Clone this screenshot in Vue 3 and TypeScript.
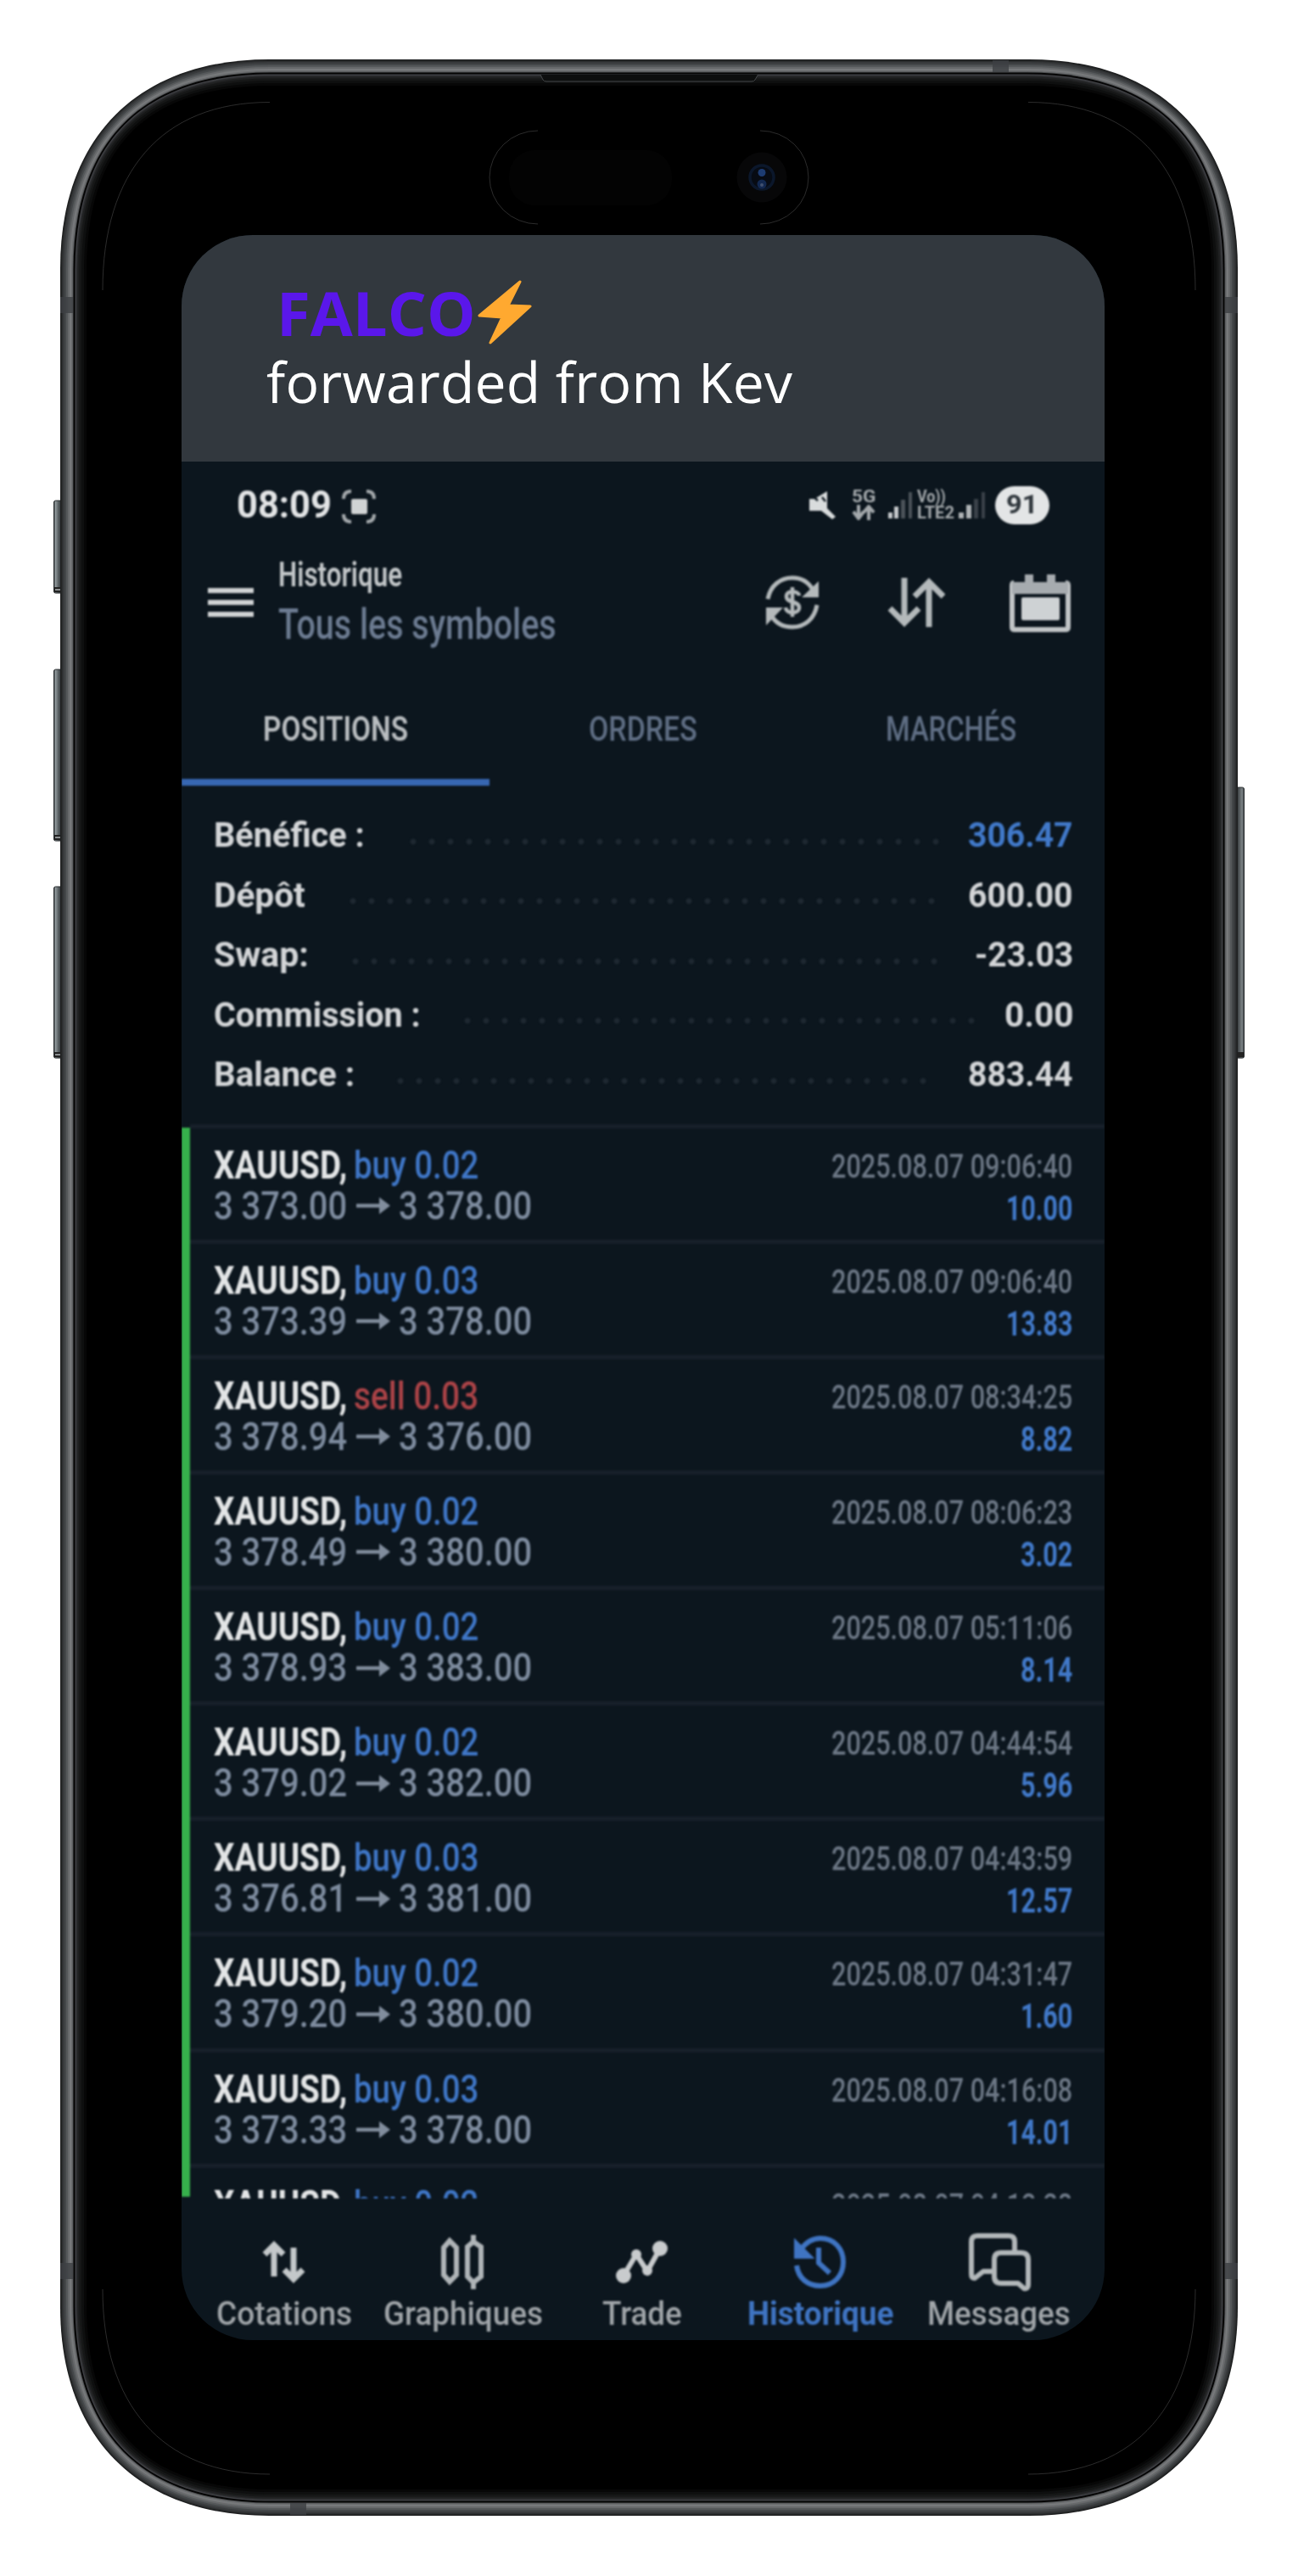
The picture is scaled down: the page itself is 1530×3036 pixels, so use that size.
<script setup lang="ts">
import type { Directive } from 'vue'

interface Total { label: string; width: number; value: string; valueWidth: number; blue?: boolean; dotsLeft: number; dotsWidth: number }
interface Deal { side: 'buy' | 'sell'; volume: string; open?: string; close?: string; time: string; profit?: string }

// Squeezes a label horizontally so that it fills exactly the given width.
const vFit: Directive<HTMLElement, number> = {
  mounted(el, { value }) {
    const natural = el.offsetWidth
    el.style.transform = `scaleX(${value / natural})`
    el.style.marginRight = `${value - natural}px`
  },
}

const totals: Total[] = [
  { label: 'Bénéfice :', width: 178, value: '306.47', valueWidth: 124, blue: true, dotsLeft: 475, dotsWidth: 638 },
  { label: 'Dépôt', width: 108, value: '600.00', valueWidth: 124, dotsLeft: 404, dotsWidth: 706 },
  { label: 'Swap:', width: 112, value: '-23.03', valueWidth: 116, dotsLeft: 407, dotsWidth: 706 },
  { label: 'Commission :', width: 244, value: '0.00', valueWidth: 81, dotsLeft: 539, dotsWidth: 618 },
  { label: 'Balance :', width: 166, value: '883.44', valueWidth: 124, dotsLeft: 460, dotsWidth: 640 },
]

const deals: Deal[] = [
  { side: 'buy', volume: '0.02', open: '3 373.00', close: '3 378.00', time: '2025.08.07 09:06:40', profit: '10.00' },
  { side: 'buy', volume: '0.03', open: '3 373.39', close: '3 378.00', time: '2025.08.07 09:06:40', profit: '13.83' },
  { side: 'sell', volume: '0.03', open: '3 378.94', close: '3 376.00', time: '2025.08.07 08:34:25', profit: '8.82' },
  { side: 'buy', volume: '0.02', open: '3 378.49', close: '3 380.00', time: '2025.08.07 08:06:23', profit: '3.02' },
  { side: 'buy', volume: '0.02', open: '3 378.93', close: '3 383.00', time: '2025.08.07 05:11:06', profit: '8.14' },
  { side: 'buy', volume: '0.02', open: '3 379.02', close: '3 382.00', time: '2025.08.07 04:44:54', profit: '5.96' },
  { side: 'buy', volume: '0.03', open: '3 376.81', close: '3 381.00', time: '2025.08.07 04:43:59', profit: '12.57' },
  { side: 'buy', volume: '0.02', open: '3 379.20', close: '3 380.00', time: '2025.08.07 04:31:47', profit: '1.60' },
  { side: 'buy', volume: '0.03', open: '3 373.33', close: '3 378.00', time: '2025.08.07 04:16:08', profit: '14.01' },
  { side: 'buy', volume: '0.02', time: '2025.08.07 04:12:28' },
]

// Continuous-curvature outline of the phone, shrunk by i pixels on every side.
function shell(i: number): string {
  const l = 71 + i, r = 1459 - i, t = 70 + i, b = 2965 - i
  const d = 246 - i * 0.85, c = 92 - i * 0.7
  return `M${l} ${t + d}C${l} ${t + c} ${l + c} ${t} ${l + d} ${t}H${r - d}C${r - c} ${t} ${r} ${t + c} ${r} ${t + d}` +
    `V${b - d}C${r} ${b - c} ${r - c} ${b} ${r - d} ${b}H${l + d}C${l + c} ${b} ${l} ${b - c} ${l} ${b - d}Z`
}

const metal: [number, string][] = [
  [0, '#1f2021'], [1.5, '#2c2e2f'], [3, '#383a3c'], [5, '#444749'], [7, '#55585a'], [9, '#67696b'],
  [11, '#77797b'], [13, '#6c6e70'], [14.5, '#4a4c4e'], [15.5, '#050505'], [17.5, '#3d3e42'], [19, '#2b2c2e'],
  [20.5, '#1f2021'], [22.5, '#161717'], [25, '#0e0f0f'], [28, '#070707'], [31, '#000'],
]

const leftKeys = [[590, 109], [789, 202], [1045, 202]]
</script>

<template>
  <main class="stage">
    <svg class="phone" width="1530" height="3036" viewBox="0 0 1530 3036">
      <defs>
        <linearGradient id="key" x1="0" x2="1" y1="0" y2="0">
          <stop offset="0" stop-color="#33383b" /><stop offset=".2" stop-color="#8f979a" />
          <stop offset=".55" stop-color="#565d60" /><stop offset="1" stop-color="#25282a" />
        </linearGradient>
        <linearGradient id="keyRight" x1="1" x2="0" y1="0" y2="0">
          <stop offset="0" stop-color="#33383b" /><stop offset=".25" stop-color="#7d8487" />
          <stop offset="1" stop-color="#25282a" />
        </linearGradient>
      </defs>
      <g v-for="[y, h] in leftKeys" :key="y">
        <rect x="63.500" :y="y" width="10" :height="h" rx="2" fill="url(#key)" stroke="#2a2e30" />
        <rect x="64" :y="y + h - 7" width="8" height="6" fill="#222" />
        <rect x="65" :y="y + h - 5" width="6" height="2" fill="#8b8f91" />
      </g>
      <rect x="1457" y="928" width="9.500" height="319" rx="2" fill="url(#keyRight)" stroke="#2a2e30" />
      <rect x="1458" y="1240" width="8" height="6" fill="#222" />
      <path v-for="[inset, color] in metal" :key="inset" :d="shell(inset)" :fill="color" />
      <g fill="#3d4043" opacity=".8">
        <rect x="71" y="350" width="15" height="19" /><rect x="1444" y="350" width="15" height="19" />
        <rect x="71" y="2667" width="15" height="19" /><rect x="1444" y="2667" width="15" height="19" />
        <rect x="1170" y="71" width="19" height="14" /><rect x="342" y="2950" width="19" height="14" />
      </g>
      <path d="M637 88l3 6q1 2 4 2H886q3 0 4-2l3.500-6z" fill="#0d0e0e" />
      <path d="M637 88l3 6q1 2 4 2H886q3 0 4-2l3.500-6" fill="none" stroke="#45484a" />
      <g fill="none" stroke="#4a4a4a" stroke-width=".6">
        <path d="M121 342C121 203 190 120.500 318 120.500" /><path d="M1409 342C1409 203 1340 120.500 1212 120.500" />
        <path d="M121 2698C121 2833 190 2916 318 2916" /><path d="M1409 2698C1409 2833 1340 2916 1212 2916" />
        <path d="M634 154A57 55 0 0 0 634 264" /><path d="M896 154A57 55 0 0 1 896 264" />
      </g>
      <rect x="600" y="177" width="192" height="65" rx="30" fill="#030303" />
      <circle cx="898" cy="209" r="29.500" fill="#070708" />
      <circle cx="898" cy="209" r="14" fill="#070b13" stroke="#0b172b" stroke-width="3.500" />
      <circle cx="898" cy="203.500" r="4.500" fill="#1d3c72" /><circle cx="898" cy="217" r="5.500" fill="#122850" />
      <circle cx="898" cy="218" r="2" fill="#405070" />
    </svg>

    <section class="screen">
      <header class="banner">
        <div class="name">FALCO<svg class="bolt" width="64" height="76" viewBox="0 0 64 76">
          <path d="M50 2L2 42L29 44L15 74L62 31L36 30Z" fill="#ffa930" stroke="#ffa930" stroke-width="3" stroke-linejoin="round" />
        </svg></div>
        <div class="source">forwarded from Kev</div>
      </header>

      <div class="app">
        <div class="status">
          <span v-fit="112" class="clock">08:09</span>
          <svg class="capture" width="40" height="40" viewBox="0 0 40 40">
            <path d="M2 11Q2 2 11 2M29 2Q38 2 38 11M38 29Q38 38 29 38M11 38Q2 38 2 29" fill="none" stroke="#a4a9ac" stroke-width="4" />
            <rect x="11" y="11" width="19" height="18" rx="2" fill="#d0d3d4" />
          </svg>
          <svg class="mute" width="34" height="34" viewBox="0 0 34 34">
            <path d="M2 10H8L23 1V21L33 31L29 34L16 24H2Z" fill="#d9dcdd" /><path d="M3 4L12 12M17 8L21 13" stroke="#0c161e" stroke-width="2.500" />
          </svg>
          <span class="tech five"><b v-fit="28">5G</b><svg width="28" height="18" viewBox="0 0 28 18"><path d="M8 0V14M2 8L8 16L14 8M20 18V3M14 9L20 2L26 9" fill="none" stroke="#a4a9ac" stroke-width="4" /></svg></span>
          <svg class="signal" width="30" height="31" viewBox="0 0 30 31"><path d="M0 24h5v7H0zM7 17h5v14H7z" fill="#c4c8ca" /><path d="M15 9h5v22h-5zM24 0h4v31h-4z" fill="#4b5359" /></svg>
          <span class="tech volte"><b v-fit="34">Vo))</b><b v-fit="44">LTE2</b></span>
          <svg class="signal last" width="33" height="31" viewBox="0 0 33 31"><path d="M0 24h6v7H0zM9 15h6v16H9z" fill="#aeb3b5" /><path d="M18 8h5v23h-5zM27 0h4v31h-4z" fill="#3a4249" /></svg>
          <span class="battery"><span v-fit="38">91</span></span>
        </div>

        <div class="toolbar">
          <svg class="menu" width="54" height="36" viewBox="0 0 54 36"><path d="M0 4H54M0 18H54M0 32H54" stroke="#cfd2d3" stroke-width="6" /></svg>
          <div class="heading">
            <div><span v-fit="146" class="title">Historique</span></div>
            <div><span v-fit="328" class="subtitle">Tous les symboles</span></div>
          </div>
          <svg class="currency" width="66" height="66" viewBox="0 0 66 66">
            <g fill="none" stroke="#b4b9bb" stroke-width="5"><path d="M4 29C7 13 19 4 33 4C44 4 52 9 57 18M62 36C59 53 47 62 33 62C22 62 13 57 8 48" /><path d="M41 25C40 19 26 18 26 26C26 34 41 31 41 39C41 47 26 47 25 39M33 15V50" stroke-width="4.500" /></g>
            <path d="M64 8V27H44ZM2 60V39H22Z" fill="#b4b9bb" />
          </svg>
          <svg class="sort" width="68" height="60" viewBox="0 0 68 60"><g fill="none" stroke="#b4b9bb" stroke-width="7"><path d="M20 1V54M3 37L20 54L37 37" /><path d="M49 59V6M32 23L49 6L66 23" /></g></svg>
          <svg class="calendar" width="72" height="70" viewBox="0 0 72 70">
            <path d="M5 12Q3 12 3 15V64Q3 67 6 67H66Q69 67 69 64V15Q69 12 66 12" fill="none" stroke="#c0c4c6" stroke-width="6" />
            <path d="M3 11H18V2H28V11H44V2H54V11H69V25H3Z" fill="#a6abaf" />
            <rect x="14" y="29" width="45" height="27" rx="2" fill="#ced2d4" />
          </svg>
        </div>

        <nav class="tabs">
          <div class="tab active"><span v-fit="171">POSITIONS</span></div>
          <div class="tab"><span v-fit="128">ORDRES</span></div>
          <div class="tab"><span v-fit="154">MARCHÉS</span></div>
        </nav>

        <div class="totals">
          <div v-for="t in totals" :key="t.label" class="total">
            <span v-fit="t.width" class="label">{{ t.label }}</span>
            <i class="dots" :style="{ marginLeft: t.dotsLeft - 251 - t.width + 'px', width: t.dotsWidth + 'px' }"></i>
            <span class="amount"><span v-fit="t.valueWidth" :class="{ blue: t.blue }">{{ t.value }}</span></span>
          </div>
        </div>

        <div class="history">
          <div class="stripe"></div>
          <div class="deals">
            <article v-for="(d, n) in deals" :key="n" class="deal">
              <div class="trade">
                <div class="line"><b v-fit="157" class="symbol">XAUUSD,</b><span v-fit="147" :class="['side', d.side]">{{ d.side }} {{ d.volume }}</span></div>
                <div v-if="d.open" class="line prices">
                  <span v-fit="157">{{ d.open }}</span>
                  <svg class="arrow" width="40" height="24" viewBox="0 0 40 24"><path d="M0 12H32" stroke="#818d9d" stroke-width="4.500" /><path d="M27 2L40 12L27 22Z" fill="#818d9d" /></svg>
                  <span v-fit="157">{{ d.close }}</span>
                </div>
              </div>
              <div class="result">
                <div class="time"><span v-fit="284">{{ d.time }}</span></div>
                <div v-if="d.profit" class="profit"><b v-fit="d.profit.length > 4 ? 78 : 61">{{ d.profit }}</b></div>
              </div>
            </article>
          </div>
        </div>

        <nav class="bottom">
          <div class="item">
            <svg width="52" height="50" viewBox="0 0 52 50"><g fill="none" stroke="#c4c8ca" stroke-width="7"><path d="M14 42V5M3 16L14 5L25 16" /><path d="M37 8V45M26 34L37 45L48 34" /></g></svg>
            <span v-fit="160">Cotations</span>
          </div>
          <div class="item">
            <svg width="52" height="64" viewBox="0 0 52 64"><path d="M3 15L10 7L18 15V47L10 55L3 47ZM31 14L38 8L47 14V49L38 56L31 49ZM38 0V9M38 55V64" fill="none" stroke="#afb4b7" stroke-width="6" /></svg>
            <span v-fit="188">Graphiques</span>
          </div>
          <div class="item">
            <svg width="62" height="52" viewBox="0 0 62 52"><path d="M10 42L25 17L38 37L53 10" fill="none" stroke="#c8cbcd" stroke-width="6" /><g fill="#c8cbcd"><circle cx="10" cy="42" r="9" /><circle cx="25" cy="17" r="6" /><circle cx="38" cy="36" r="6" /><circle cx="53" cy="10" r="9" /></g></svg>
            <span v-fit="94">Trade</span>
          </div>
          <div class="item current">
            <svg width="62" height="64" viewBox="0 0 62 64"><path d="M3 36C5 51 16 60 31 60C47 60 58 48 58 32C58 16 47 4 31 4C22 4 14 9 8 17M29 15V33L42 45" fill="none" stroke="#3f74c2" stroke-width="6" /><path d="M1 6V27H22Z" fill="#3f74c2" stroke="#3f74c2" stroke-width="2" /></svg>
            <b v-fit="172">Historique</b>
          </div>
          <div class="item">
            <svg width="74" height="70" viewBox="0 0 74 70"><g fill="none" stroke="#b2b7b9" stroke-width="6" stroke-linejoin="round"><path d="M29 46H18L8 54Q4 54 4 49V11Q4 4 11 4H48Q55 4 55 11V22" /><path d="M39 24H62Q71 24 71 32V62Q71 67 66 66L59 60H39Q31 60 31 52V32Q31 24 39 24Z" /></g></svg>
            <span v-fit="169">Messages</span>
          </div>
        </nav>
      </div>
    </section>
  </main>
</template>

<style>
body { margin: 0; background: #fff; }
</style>

<style scoped>
.stage { display: grid; width: 1530px; height: 3036px; overflow: hidden; font-family: Roboto, "Liberation Sans", sans-serif; }
.phone { grid-area: 1 / 1; display: block; }
.screen { grid-area: 1 / 1; z-index: 1; box-sizing: border-box; width: 1088px; height: 2481px; margin: 277px 0 0 214px; overflow: hidden; border-radius: 84px; background: #0c161e; }
.screen span, .screen b { display: inline-block; white-space: nowrap; transform-origin: 0 50%; }
.banner { box-sizing: border-box; height: 267px; padding-top: 51px; background: #32383e; font-family: "Open Sans", "Noto Sans", sans-serif; }
.name { display: flex; align-items: center; height: 80px; padding-left: 112px; font-size: 72.500px; line-height: 80px; font-weight: 700; color: #5a17ea; }
.bolt { margin: 0 0 0 2px; }
.source { margin-top: 1px; padding-left: 100px; font-size: 66px; line-height: 80px; letter-spacing: 0.22px; color: #fff; white-space: nowrap; }
.app { filter: blur(1.1px); }

.status { display: flex; align-items: center; height: 60px; padding: 21px 65px 0 65px; color: #e2e4e5; }
.clock { font-size: 45px; line-height: 60px; font-weight: 700; }
.capture { margin: 3px 0 0 12px; }
.mute { margin-left: auto; }
.tech { height: 38px; color: #a4a9ac; font-size: 21px; line-height: 19px; }
.screen .tech { display: flex; flex-direction: column; align-items: flex-start; }
.five { width: 28px; margin-left: 18px; }
.volte { width: 44px; margin-left: 4px; }
.signal { margin-left: 15px; }
.signal.last { margin-left: 5px; }
.screen .battery { display: flex; align-items: center; justify-content: center; width: 64px; height: 45px; margin-left: 10px; border-radius: 23px; background: #e3e5e6; color: #30373d; font-size: 31px; font-weight: 700; line-height: 46px; }

.toolbar { display: flex; align-items: center; height: 113px; margin-top: 28px; padding: 0 40px 0 31px; }
.heading { display: flex; flex-direction: column; gap: 3px; margin-left: 29px; }
.title { font-size: 40px; line-height: 50px; font-weight: 600; color: #c2c6c8; }
.subtitle { font-size: 50px; line-height: 60px; font-weight: 500; color: #6c7b91; }
.currency { margin-left: auto; }
.sort { margin-left: 79px; }
.calendar { margin-left: 76px; }

.tabs { display: flex; height: 161px; }
.tab { box-sizing: border-box; flex: 1; padding-top: 68px; text-align: center; font-size: 41px; line-height: 50px; font-weight: 500; color: #5f6e84; }
.tab.active { flex: 0 0 363px; height: 160px; border-bottom: 8px solid #3767b2; color: #b9bdc0; font-weight: 600; }

.totals { padding: 22px 37px 23px 38px; }
.total { display: flex; align-items: center; height: 70.500px; font-size: 41px; line-height: 70px; font-weight: 700; color: #d3d5d7; }
.dots { height: 8px; margin-top: 15px; background: radial-gradient(circle at 50% 50%, #1f2932 2.500px, transparent 4px) 0 0 / 22px 8px repeat-x; }
.amount { margin-left: auto; }
.blue { color: #4179c9; }

.history { display: flex; height: 1266px; margin-bottom: 3px; overflow: hidden; }
.stripe { width: 10px; margin: 4px 0 2px; background: #36b04b; }
.deals { flex: 1; }
.deal { box-sizing: border-box; display: flex; justify-content: space-between; height: 136.150px; padding: 18px 38px 0 28px; border-top: 5px solid #17202a; }
.line { height: 49px; font-size: 47px; line-height: 49px; white-space: nowrap; }
.symbol { color: #e3e5e6; font-weight: 700; }
.side { margin-left: 8px; font-weight: 500; }
.side.buy { color: #3f76c6; }
.side.sell { color: #ab4347; }
.prices { display: flex; align-items: center; font-size: 46px; font-weight: 500; color: #7d8b9e; }
.arrow { margin: 0 10px 0 11px; }
.result { padding-top: 3px; text-align: right; line-height: 49px; }
.time { height: 49px; font-size: 39px; color: #6c7785; font-weight: 500; }
.profit { height: 49px; font-size: 40px; color: #4179c9; }

.bottom { display: flex; padding: 37px 19px 0 16px; }
.item { flex: 1; display: flex; flex-direction: column; align-items: center; width: 0; font-size: 38px; line-height: 44px; font-weight: 500; color: #a0a5a9; }
.item svg { display: block; height: 70px; margin-bottom: 4px; }
.current { color: #3f74c2; }
</style>
